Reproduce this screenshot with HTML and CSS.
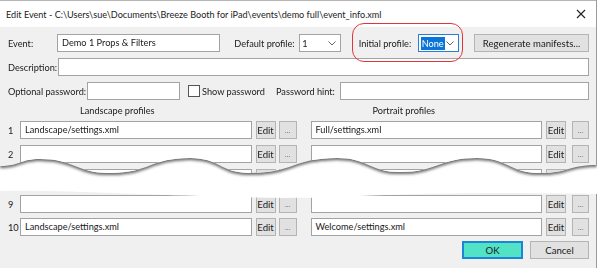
FILE: index.html
```html
<!DOCTYPE html>
<html lang="en">
<head>
    <meta charset="UTF-8">
    <title>Edit Event</title>
    <link rel="stylesheet" href="styles.css">
</head>
<body>
<div class="window">
    <!-- Upper torn piece -->
    <div class="tear-shadow">
        <div class="sheet sheet-top">
            <div class="titlebar">
                <span class="title">Edit Event - C:\Users\sue\Documents\Breeze Booth for iPad\events\demo full\event_info.xml</span>
                <svg class="close" width="10" height="10" viewBox="0 0 10 10">
                    <path d="M1 1 L9 9 M9 1 L1 9" stroke="#222" stroke-width="1.1" fill="none"/>
                </svg>
            </div>

            <div class="content">
                <div class="row">
                    <span class="label w-event">Event:</span>
                    <div class="textbox w-name">Demo 1 Props &amp; Filters</div>
                    <span class="label w-default">Default profile:</span>
                    <div class="combo">
                        <span class="combo-text">1</span>
                        <svg class="chevron" width="8" height="5" viewBox="0 0 8 5"><path d="M0.5 0.5 L4 4 L7.5 0.5" stroke="#666" fill="none"/></svg>
                    </div>
                    <span class="label w-initial">Initial profile:</span>
                    <div class="combo combo-focus">
                        <span class="combo-text selected">None</span>
                        <svg class="chevron" width="8" height="5" viewBox="0 0 8 5"><path d="M0.5 0.5 L4 4 L7.5 0.5" stroke="#666" fill="none"/></svg>
                    </div>
                    <button class="btn w-regen">Regenerate manifests...</button>
                </div>

                <div class="row">
                    <span class="label w-desc">Description:</span>
                    <div class="textbox grow"></div>
                </div>

                <div class="row">
                    <span class="label w-optional">Optional password:</span>
                    <div class="textbox w-pass"></div>
                    <span class="checkbox"></span>
                    <span class="label w-show">Show password</span>
                    <span class="label w-hint">Password hint:</span>
                    <div class="textbox grow"></div>
                </div>

                <div class="headings">
                    <span class="heading h-land">Landscape profiles</span>
                    <span class="heading h-port">Portrait profiles</span>
                </div>

                <div class="prow">
                    <span class="num">1</span>
                    <div class="textbox pbox">Landscape/settings.xml</div>
                    <button class="btn edit">Edit</button>
                    <button class="btn dots">...</button>
                    <div class="textbox pbox port">Full/settings.xml</div>
                    <button class="btn edit">Edit</button>
                    <button class="btn dots dots-r">...</button>
                </div>
                <div class="prow">
                    <span class="num">2</span>
                    <div class="textbox pbox"></div>
                    <button class="btn edit">Edit</button>
                    <button class="btn dots">...</button>
                    <div class="textbox pbox port"></div>
                    <button class="btn edit">Edit</button>
                    <button class="btn dots dots-r">...</button>
                </div>
                <div class="prow">
                    <span class="num">3</span>
                    <div class="textbox pbox"></div>
                    <button class="btn edit">Edit</button>
                    <button class="btn dots">...</button>
                    <div class="textbox pbox port"></div>
                    <button class="btn edit">Edit</button>
                    <button class="btn dots dots-r">...</button>
                </div>
            </div>

            <!-- annotation -->
            <div class="callout"></div>
        </div>
    </div>

    <!-- Lower torn piece -->
    <div class="sheet sheet-bottom">
        <div class="prow">
            <span class="num">9</span>
            <div class="textbox pbox"></div>
            <button class="btn edit">Edit</button>
            <button class="btn dots">...</button>
            <div class="textbox pbox port"></div>
            <button class="btn edit">Edit</button>
            <button class="btn dots dots-r">...</button>
        </div>
        <div class="prow">
            <span class="num">10</span>
            <div class="textbox pbox">Landscape/settings.xml</div>
            <button class="btn edit">Edit</button>
            <button class="btn dots">...</button>
            <div class="textbox pbox port">Welcome/settings.xml</div>
            <button class="btn edit">Edit</button>
            <button class="btn dots dots-r">...</button>
        </div>
        <div class="actions">
            <button class="btn ok">OK</button>
            <button class="btn cancel">Cancel</button>
        </div>
    </div>
</div>
</body>
</html>
```

FILE: styles.css
```css
/* General */
body {
    margin: 0;
    background-color: #ffffff;
    font-family: Lato, "Noto Sans", sans-serif;
    font-size: 9.2px;
    color: #1a1a1a;
}

.window {
    width: 597px;
    height: 268px;
    overflow: hidden;
}

/* Torn paper pieces */
.tear-shadow {
    height: 186px;
    filter: drop-shadow(0 2px 1.5px rgba(0, 0, 0, 0.6));
}

.sheet {
    background-color: #f0f0f0;
    border-right: 1px solid #9a9a9a;
    position: relative;
}

.sheet-top {
    height: 180px;
    clip-path: path('M0,0 H598 V165 C568.5,165 568.5,173 540,173 C508.5,173 508.5,158 477,158 C438.5,158 438.5,172 400,172 C368.5,172 368.5,158 337,158 C293.5,158 293.5,173 250,173 C220,173 220,158 190,158 C150,158 150,173 110,173 C75,173 75,159 40,159 C20,159 20,166 0,166 Z');
}

.sheet-bottom {
    height: 82px;
    padding: 9px 7px 0 8px;
    clip-path: path('M0,5 C60,4 120,8 200,10 C260,12 300,13 360,10 C430,7 500,6 598,8 V90 H0 Z');
}

/* Title bar */
.titlebar {
    height: 26px;
    background-color: #ffffff;
    border-top: 1px solid #b5b5b5;
    display: flex;
    align-items: center;
    padding: 0 8px 0 6px;
    font-size: 9.1px;
    color: #222;
}

.title {
    flex: 1;
}

.close {
    margin-right: 2px;
}

/* Form content */
.content {
    padding: 7px 7px 0 8px;
}

.row {
    display: flex;
    align-items: center;
    height: 18px;
    margin-bottom: 6px;
}

.label {
    flex: none;
    white-space: nowrap;
}

.w-event { width: 49px; }
.w-default { width: 62px; margin-left: 14px; }
.w-initial { width: 56px; margin-left: 18px; }
.w-desc { width: 50px; }
.w-optional { width: 79px; }
.w-show { width: 74px; margin-left: 2px; }
.w-hint { width: 64px; }

.textbox {
    box-sizing: border-box;
    height: 18px;
    background-color: #ffffff;
    border: 1px solid #a3a3a3;
    padding: 0 4px;
    line-height: 15px;
    white-space: nowrap;
    overflow: hidden;
}

.w-name { width: 166px; }
.w-pass { width: 93px; }
.grow { flex: 1; }

.combo {
    box-sizing: border-box;
    width: 42px;
    height: 18px;
    margin-left: 3px;
    background-color: #ffffff;
    border: 1px solid #a3a3a3;
    display: flex;
    align-items: center;
    justify-content: space-between;
    padding: 0 4px 0 2px;
}

.combo-focus {
    border-color: #2b7ed6;
}

.combo-text {
    line-height: 13px;
}

.combo-text.selected {
    background-color: #0a74d8;
    color: #ffffff;
    padding: 0 1px;
}

.checkbox {
    box-sizing: border-box;
    width: 12px;
    height: 12px;
    margin-left: 8px;
    background-color: #ffffff;
    border: 1px solid #555;
}

.btn {
    box-sizing: border-box;
    font-family: inherit;
    font-size: 9.6px;
    color: #1a1a1a;
    background-color: #e1e1e1;
    border: 1px solid #b4b4b4;
    padding: 0;
    height: 18px;
}

.w-regen {
    width: 117px;
    margin-left: 15px;
}

/* Profile lists */
.headings {
    display: flex;
    height: 15px;
    line-height: 15px;
    margin: -3px 0 3px;
}

.h-land { margin-left: 72px; }
.h-port { margin-left: 218px; }

.prow {
    display: flex;
    align-items: center;
    height: 18px;
    margin-bottom: 6px;
}

.num {
    width: 12px;
    flex: none;
}

.pbox {
    width: 232px;
}

.pbox.port {
    margin-left: 14px;
}

.edit {
    width: 20px;
    margin-left: 4px;
}

.dots {
    width: 18px;
    margin-left: 3px;
    color: #777;
    font-size: 8px;
}

.dots-r {
    width: 17px;
    margin-left: 6px;
}

.sheet-bottom .prow {
    margin-bottom: 5px;
}

.actions {
    display: flex;
    justify-content: flex-end;
    margin-top: 3px;
}

.ok {
    width: 61px;
    background-color: #52e2c6;
    border: 2px solid #1c86d6;
}

.cancel {
    width: 59px;
    margin-left: 7px;
}

/* Red annotation ring around the initial profile field */
.callout {
    position: absolute;
    left: 352px;
    top: 23px;
    width: 111px;
    height: 39px;
    box-sizing: border-box;
    border: 1.5px solid #e0353a;
    border-radius: 12px;
}
```
